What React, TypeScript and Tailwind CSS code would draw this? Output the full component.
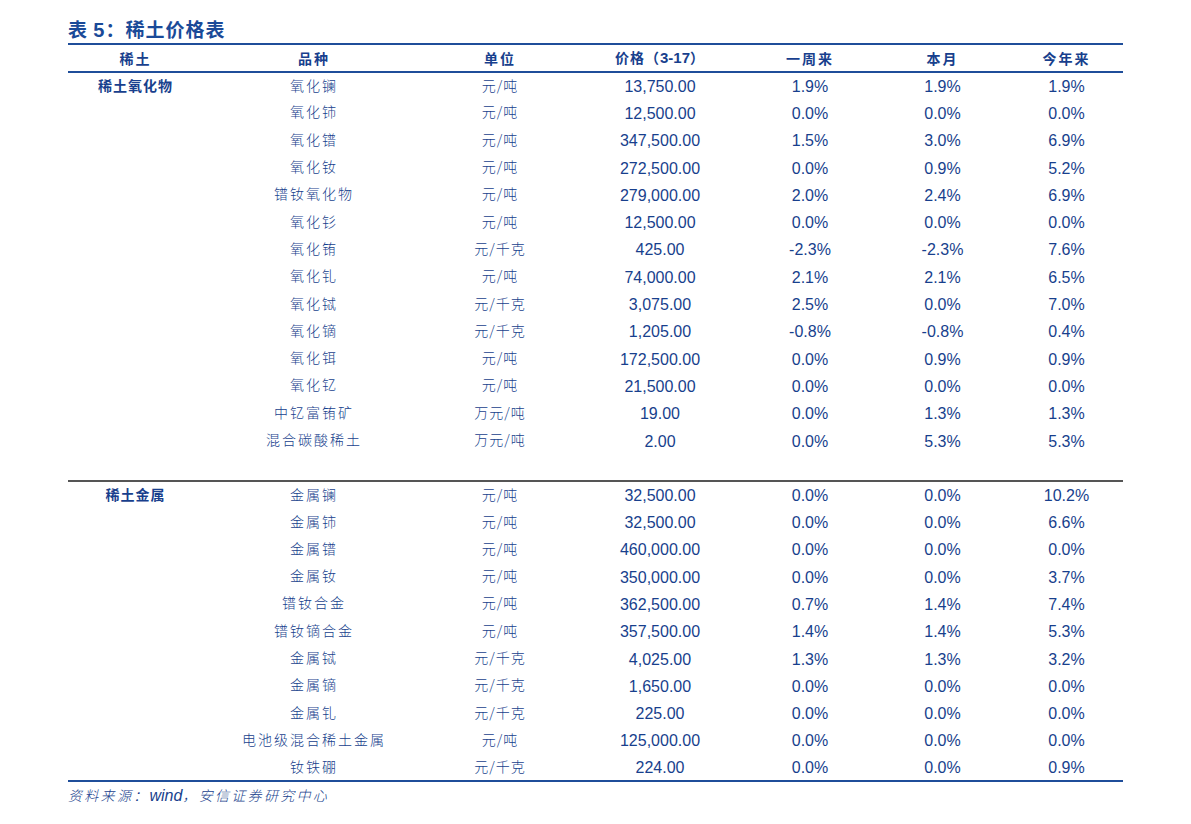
const cols = ["w-[135px]", "w-[222px]", "w-[150px]", "w-[170px]", "w-[130px]", "w-[135px]", "w-[113px]"];

type Row = [string, string, string, string, string, string];

const oxides: Row[] = [
  ["氧化镧", "元/吨", "13,750.00", "1.9%", "1.9%", "1.9%"],
  ["氧化铈", "元/吨", "12,500.00", "0.0%", "0.0%", "0.0%"],
  ["氧化镨", "元/吨", "347,500.00", "1.5%", "3.0%", "6.9%"],
  ["氧化钕", "元/吨", "272,500.00", "0.0%", "0.9%", "5.2%"],
  ["镨钕氧化物", "元/吨", "279,000.00", "2.0%", "2.4%", "6.9%"],
  ["氧化钐", "元/吨", "12,500.00", "0.0%", "0.0%", "0.0%"],
  ["氧化铕", "元/千克", "425.00", "-2.3%", "-2.3%", "7.6%"],
  ["氧化钆", "元/吨", "74,000.00", "2.1%", "2.1%", "6.5%"],
  ["氧化铽", "元/千克", "3,075.00", "2.5%", "0.0%", "7.0%"],
  ["氧化镝", "元/千克", "1,205.00", "-0.8%", "-0.8%", "0.4%"],
  ["氧化铒", "元/吨", "172,500.00", "0.0%", "0.9%", "0.9%"],
  ["氧化钇", "元/吨", "21,500.00", "0.0%", "0.0%", "0.0%"],
  ["中钇富铕矿", "万元/吨", "19.00", "0.0%", "1.3%", "1.3%"],
  ["混合碳酸稀土", "万元/吨", "2.00", "0.0%", "5.3%", "5.3%"],
];

const metals: Row[] = [
  ["金属镧", "元/吨", "32,500.00", "0.0%", "0.0%", "10.2%"],
  ["金属铈", "元/吨", "32,500.00", "0.0%", "0.0%", "6.6%"],
  ["金属镨", "元/吨", "460,000.00", "0.0%", "0.0%", "0.0%"],
  ["金属钕", "元/吨", "350,000.00", "0.0%", "0.0%", "3.7%"],
  ["镨钕合金", "元/吨", "362,500.00", "0.7%", "1.4%", "7.4%"],
  ["镨钕镝合金", "元/吨", "357,500.00", "1.4%", "1.4%", "5.3%"],
  ["金属铽", "元/千克", "4,025.00", "1.3%", "1.3%", "3.2%"],
  ["金属镝", "元/千克", "1,650.00", "0.0%", "0.0%", "0.0%"],
  ["金属钆", "元/千克", "225.00", "0.0%", "0.0%", "0.0%"],
  ["电池级混合稀土金属", "元/吨", "125,000.00", "0.0%", "0.0%", "0.0%"],
  ["钕铁硼", "元/千克", "224.00", "0.0%", "0.0%", "0.9%"],
];

const cjk = "font-['Noto_Sans_CJK_SC',sans-serif]";
const num = "font-['Liberation_Sans',Arial,sans-serif]";

function Group({ label, rows }: { label: string; rows: Row[] }) {
  return (
    <>
      {rows.map((r, i) => (
        <tr key={i} className="h-[27.3px]">
          <td className={`${cjk} pb-[2px] text-center text-[14px] font-bold tracking-[1px]`}>{i === 0 ? label : ""}</td>
          <td className={`${cjk} pb-[2px] text-center text-[14px] font-light tracking-[2px]`}>{r[0]}</td>
          <td className={`${cjk} pb-[2px] text-center text-[14px] font-light tracking-[1px]`}>{r[1]}</td>
          <td className={`${num} pt-[2px] text-center text-[16px]`}>{r[2]}</td>
          <td className={`${num} pt-[2px] text-center text-[16px]`}>{r[3]}</td>
          <td className={`${num} pt-[2px] text-center text-[16px]`}>{r[4]}</td>
          <td className={`${num} pt-[2px] text-center text-[16px]`}>{r[5]}</td>
        </tr>
      ))}
    </>
  );
}

export default function App() {
  return (
    <main className="w-[1191px] h-[824px] bg-white pl-[68px] pt-[16px] text-[#183f8d]">
      <h1 className={`${cjk} text-[19px] font-bold leading-[26px] text-[#1a4a98] tracking-[1px]`}>
        表 <span className={`${num} font-bold text-[20px]`}>5</span>：稀土价格表
      </h1>
      <table className="table-fixed border-collapse w-[1055px]">
        <colgroup>
          {cols.map((c, i) => (
            <col key={i} className={c} />
          ))}
        </colgroup>
        <thead>
          <tr className="h-[28px] border-t-2 border-b-2 border-[#1f4e9a]">
            {["稀土", "品种", "单位"].map((h) => (
              <th key={h} className={`${cjk} text-[14px] font-bold tracking-[2px]`}>{h}</th>
            ))}
            <th className={`${cjk} text-[14px] font-bold tracking-[1px]`}>
              价格（<span className={`${num} text-[15px] tracking-normal`}>3-17</span>）
            </th>
            {["一周来", "本月", "今年来"].map((h) => (
              <th key={h} className={`${cjk} text-[14px] font-bold tracking-[2px]`}>{h}</th>
            ))}
          </tr>
        </thead>
        <tbody>
          <Group label="稀土氧化物" rows={oxides} />
          <tr className="h-[27px]">
            <td colSpan={7} />
          </tr>
        </tbody>
        <tbody className="border-t-2 border-[#555]">
          <Group label="稀土金属" rows={metals} />
        </tbody>
        <tfoot>
          <tr className="border-t-2 border-[#1f4e9a]">
            <td colSpan={7} />
          </tr>
        </tfoot>
      </table>
      <p className={`${cjk} italic text-[14px] font-light tracking-[2.3px] mt-[3px] leading-[20px]`}>
        资料来源：<span className={`${num} text-[16px] tracking-normal`}>wind</span>，安信证券研究中心
      </p>
    </main>
  );
}
